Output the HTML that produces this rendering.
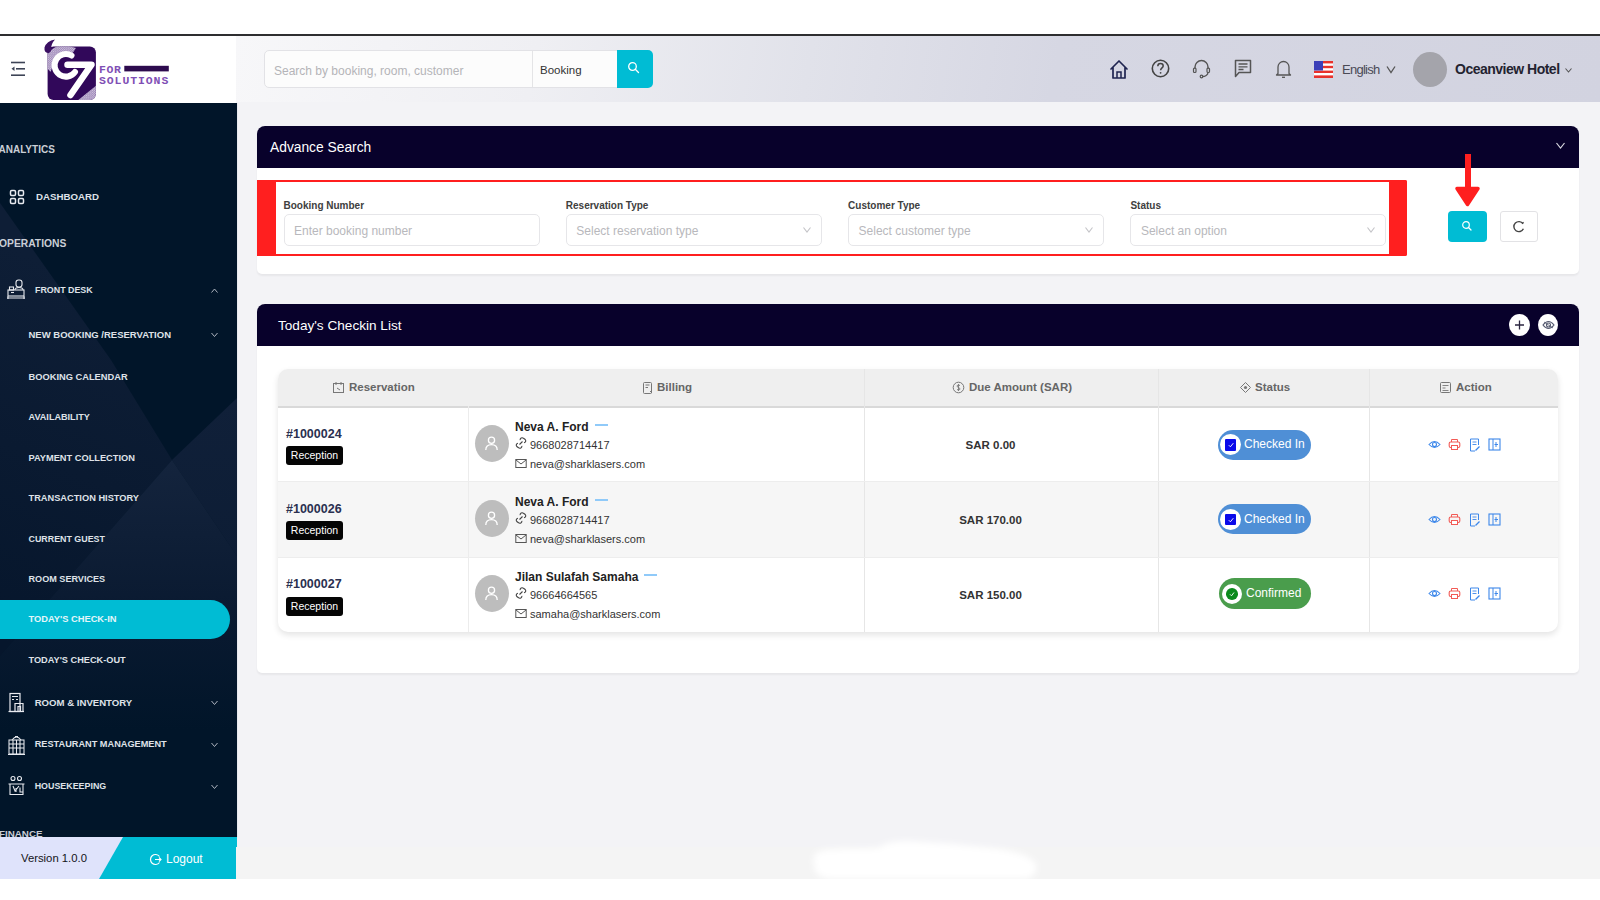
<!DOCTYPE html>
<html><head><meta charset="utf-8">
<style>
*{margin:0;padding:0;box-sizing:border-box}
html,body{width:1600px;height:900px;overflow:hidden;background:#fff;font-family:"Liberation Sans",sans-serif}
.abs{position:absolute}
#topline{left:0;top:34px;width:1600px;height:2px;background:#2e2e30}
#logozone{left:0;top:36px;width:236px;height:67px;background:#fff}
#hdr{left:236px;top:36px;width:1364px;height:66px;background:linear-gradient(100deg,#f7f7f9 0%,#efeff3 22%,#e1e2ea 42%,#d6d7e3 60%,#d2d3e0 100%)}
#main{left:236px;top:102px;width:1364px;height:777px;background:#f3f3f6}
#side{left:0;top:103px;width:236.7px;height:734px;background:#011529;overflow:hidden}
#sideborder{left:236.7px;top:103px;width:1px;height:734px;background:#e8e9ee}
#botbar{left:0;top:837px;width:236px;height:42px;background:#00bcd4;overflow:hidden}
#bottom{left:0;top:879px;width:1600px;height:21px;background:#fff}
.card{background:#fff;border-radius:8px 8px 5px 5px;box-shadow:0 1.5px 2px rgba(0,0,0,0.05)}
.chd{background:#08012b;border-radius:8px 8px 0 0;color:#fff}
</style></head>
<body>
<div class="abs" id="topline"></div>
<div class="abs" id="logozone"></div>
<div class="abs" id="hdr"></div>
<div class="abs" id="main"></div>
<div class="abs" id="side"></div>
<div class="abs" id="sideborder"></div>

<!-- sidebar -->
<svg class="abs" style="left:0;top:103px" width="236.7" height="734" viewBox="0 103 236.7 734">
  <defs>
    <linearGradient id="g1" x1="140" y1="300" x2="0" y2="640" gradientUnits="userSpaceOnUse">
      <stop offset="0" stop-color="#0e1e36"/>
      <stop offset="1" stop-color="#06162c"/>
    </linearGradient>
    <linearGradient id="g2" x1="0" y1="400" x2="0" y2="560" gradientUnits="userSpaceOnUse">
      <stop offset="0" stop-color="#102039"/>
      <stop offset="1" stop-color="#0d1d35"/>
    </linearGradient>
    <linearGradient id="g3" x1="0" y1="460" x2="0" y2="730" gradientUnits="userSpaceOnUse">
      <stop offset="0" stop-color="#14243d"/>
      <stop offset="0.55" stop-color="#0a1a31"/>
      <stop offset="1" stop-color="#011529"/>
    </linearGradient>
  </defs>
  <polygon points="0,203 111,360 172,460 0,656" fill="url(#g1)"/>
  <polygon points="237,398 172,460 237,556" fill="url(#g2)"/>
  <polygon points="172,460 0,656 0,837 237,837 237,556" fill="url(#g3)"/>
</svg>
<div class="abs" style="left:0;top:600px;width:230px;height:39px;background:#00bcd4;border-radius:0 20px 20px 0"></div>
<div class="abs" style="left:-1.5px;top:144.2px;font-size:10px;line-height:11.5px;font-weight:700;color:#c9ced6;white-space:nowrap">ANALYTICS</div>
<div class="abs" style="left:36px;top:191.4px;font-size:9.7px;line-height:11.2px;font-weight:700;color:#dfe2e8;white-space:nowrap">DASHBOARD</div>
<div class="abs" style="left:-1px;top:238.0px;font-size:10.3px;line-height:11.8px;font-weight:700;color:#c9ced6;white-space:nowrap">OPERATIONS</div>
<div class="abs" style="left:35px;top:284.8px;font-size:8.9px;line-height:10.2px;font-weight:700;color:#dfe2e8;white-space:nowrap">FRONT DESK</div>
<div class="abs" style="left:28.5px;top:329.5px;font-size:9.5px;line-height:10.9px;font-weight:700;color:#dfe2e8;white-space:nowrap">NEW BOOKING /RESERVATION</div>
<div class="abs" style="left:28.5px;top:371.6px;font-size:9.3px;line-height:10.7px;font-weight:700;color:#dfe2e8;white-space:nowrap">BOOKING CALENDAR</div>
<div class="abs" style="left:28.5px;top:412.4px;font-size:9.1px;line-height:10.5px;font-weight:700;color:#dfe2e8;white-space:nowrap">AVAILABILITY</div>
<div class="abs" style="left:28.5px;top:452.6px;font-size:9.25px;line-height:10.6px;font-weight:700;color:#dfe2e8;white-space:nowrap">PAYMENT COLLECTION</div>
<div class="abs" style="left:28.5px;top:492.6px;font-size:9.25px;line-height:10.6px;font-weight:700;color:#dfe2e8;white-space:nowrap">TRANSACTION HISTORY</div>
<div class="abs" style="left:28.5px;top:533.5px;font-size:8.9px;line-height:10.2px;font-weight:700;color:#dfe2e8;white-space:nowrap">CURRENT GUEST</div>
<div class="abs" style="left:28.5px;top:573.7px;font-size:9.1px;line-height:10.5px;font-weight:700;color:#dfe2e8;white-space:nowrap">ROOM SERVICES</div>
<div class="abs" style="left:28.5px;top:613.6px;font-size:9.3px;line-height:10.7px;font-weight:700;color:#e3f6f9;white-space:nowrap">TODAY'S CHECK-IN</div>
<div class="abs" style="left:28.5px;top:654.7px;font-size:9.2px;line-height:10.6px;font-weight:700;color:#dfe2e8;white-space:nowrap">TODAY'S CHECK-OUT</div>
<div class="abs" style="left:34.7px;top:697.4px;font-size:9.6px;line-height:11.0px;font-weight:700;color:#dfe2e8;white-space:nowrap">ROOM &amp; INVENTORY</div>
<div class="abs" style="left:34.7px;top:739.0px;font-size:9.2px;line-height:10.6px;font-weight:700;color:#dfe2e8;white-space:nowrap">RESTAURANT MANAGEMENT</div>
<div class="abs" style="left:34.7px;top:780.5px;font-size:8.9px;line-height:10.2px;font-weight:700;color:#dfe2e8;white-space:nowrap">HOUSEKEEPING</div>
<div class="abs" style="left:-1px;top:828.3px;font-size:9.8px;line-height:11.3px;font-weight:700;color:#c9ced6;white-space:nowrap">FINANCE</div>
<svg class="abs" style="left:209.5px;top:286.5px" width="9" height="7" viewBox="0 0 9 7"><path d="M1.5 5.5L4.5 2L7.5 5.5" fill="none" stroke="#aeb4bf" stroke-width="1"/></svg>
<svg class="abs" style="left:209.5px;top:331.0px" width="9" height="7" viewBox="0 0 9 7"><path d="M1.5 2L4.5 5.5L7.5 2" fill="none" stroke="#aeb4bf" stroke-width="1"/></svg>
<svg class="abs" style="left:209.5px;top:698.5px" width="9" height="7" viewBox="0 0 9 7"><path d="M1.5 2L4.5 5.5L7.5 2" fill="none" stroke="#aeb4bf" stroke-width="1"/></svg>
<svg class="abs" style="left:209.5px;top:740.5px" width="9" height="7" viewBox="0 0 9 7"><path d="M1.5 2L4.5 5.5L7.5 2" fill="none" stroke="#aeb4bf" stroke-width="1"/></svg>
<svg class="abs" style="left:209.5px;top:782.5px" width="9" height="7" viewBox="0 0 9 7"><path d="M1.5 2L4.5 5.5L7.5 2" fill="none" stroke="#aeb4bf" stroke-width="1"/></svg>
<svg class="abs" style="left:9px;top:189px" width="16" height="16" viewBox="0 0 16 16" fill="none" stroke="#e8eaef" stroke-width="1.5"><rect x="1.5" y="1.5" width="5" height="5" rx="1.2"/><rect x="9.5" y="1.5" width="5" height="5" rx="1.2"/><rect x="1.5" y="9.5" width="5" height="5" rx="1.2"/><rect x="9.5" y="9.5" width="5" height="5" rx="1.2"/></svg>
<svg class="abs" style="left:6px;top:278px" width="20" height="22" viewBox="0 0 20 22" fill="none" stroke="#e8eaef" stroke-width="1.1"><rect x="10" y="2" width="6" height="7" rx="2.5"/><path d="M9 12Q9 9.5 13 9.5Q17 9.5 17 12"/><rect x="2" y="12" width="16" height="6"/><path d="M1 20H19M2 18V21M18 18V21"/><rect x="3.5" y="9" width="4" height="3"/><path d="M5 14.5H8"/></svg>
<svg class="abs" style="left:8px;top:692px" width="17" height="21" viewBox="0 0 17 21" fill="none" stroke="#e8eaef" stroke-width="1.2"><rect x="2" y="1.5" width="10" height="18"/><path d="M0.5 19.5H16"/><path d="M4 4.5H10M4 7.5H6M8 7.5H10"/><path d="M7 19.5V11.5H15V19.5"/><path d="M10 19.5V14.5H12.5V19.5"/></svg>
<svg class="abs" style="left:7px;top:734px" width="19" height="22" viewBox="0 0 19 22" fill="none" stroke="#e8eaef" stroke-width="1.05"><path d="M5 6Q9.5 0 14 6"/><path d="M8 2.5H11"/><rect x="2" y="6" width="15" height="14"/><path d="M2 10H17M2 14H17M6 6V20M9.5 6V20M13 6V20M1 20.5H18"/></svg>
<svg class="abs" style="left:7px;top:775px" width="19" height="21" viewBox="0 0 19 21" fill="none" stroke="#e8eaef" stroke-width="1.1"><circle cx="6" cy="3.5" r="2"/><circle cx="12.5" cy="3.5" r="2"/><path d="M1.5 9H17.5M3 9V19.5H16V9"/><path d="M6 11L8 16L12 11M9 13V17"/><path d="M13 12.5V17H16"/></svg>
<svg class="abs" style="left:0;top:837px" width="237" height="42" viewBox="0 0 237 42"><rect width="237" height="42" fill="#00bcd4"/><polygon points="0,0 123,0 99,42 0,42" fill="#dfe3fb"/></svg>
<div class="abs" style="left:21px;top:852px;font-size:11.3px;color:#141418;white-space:nowrap">Version 1.0.0</div>
<svg class="abs" style="left:149px;top:853px" width="13" height="13" viewBox="0 0 13 13"><path d="M10.5 3.5A5 5 0 1 0 10.5 9.5" fill="none" stroke="#fff" stroke-width="1.2"/><path d="M6 6.5H12M10 4.5L12 6.5L10 8.5" fill="none" stroke="#fff" stroke-width="1.1"/></svg>
<div class="abs" style="left:166px;top:852px;font-size:12px;color:#fff;white-space:nowrap">Logout</div>


<div class="abs" style="left:236px;top:847px;width:1364px;height:32px;background:#f4f4f4"></div>
<svg class="abs" style="left:800px;top:835px" width="250" height="50" viewBox="0 0 250 50"><defs><filter id="bl" x="-20%" y="-50%" width="140%" height="200%"><feGaussianBlur stdDeviation="3"/></filter></defs>
<path d="M14 26 Q10 14 40 14 L78 13 Q88 5 110 6 Q145 8 180 12 Q230 16 236 30 Q238 44 220 44 L30 44 Q12 42 14 26Z" fill="#fff" filter="url(#bl)"/></svg>
<div class="abs" id="bottom"></div>


<!-- header content -->
<svg class="abs" style="left:9px;top:59px" width="18" height="20" viewBox="0 0 18 20">
  <path d="M2 3.5H16" stroke="#3d4456" stroke-width="1.6"/>
  <path d="M7 9.8H16" stroke="#3d4456" stroke-width="1.6"/>
  <path d="M2 16.2H16" stroke="#3d4456" stroke-width="1.6"/>
  <path d="M5.5 7.5L2.5 9.8L5.5 12.1Z" fill="#3d4456"/>
</svg>
<svg class="abs" style="left:40px;top:38px" width="136" height="66" viewBox="0 0 136 66">
  <defs>
    <pattern id="dots" width="2.2" height="2.2" patternUnits="userSpaceOnUse"><rect width="2.2" height="2.2" fill="#9c86b6"/><circle cx="0.55" cy="0.55" r="0.5" fill="#e6def0"/><circle cx="1.65" cy="1.65" r="0.5" fill="#e6def0"/></pattern>
    <clipPath id="sq"><rect x="7.6" y="8.6" width="48.3" height="53.3" rx="6"/></clipPath>
  </defs>
  <rect x="7.6" y="8.6" width="48.3" height="53.3" rx="6" fill="#31085a"/>
  <g clip-path="url(#sq)">
    <path d="M24.5 7 A20 20 0 0 0 4.5 27 L10.5 34 L13.2 27 A11.3 11.3 0 0 1 31 17.5 L36 10 Z" fill="url(#dots)"/>
    <path d="M37 63 L57 47 L58 64 Z" fill="url(#dots)"/>
  </g>
  <path d="M15 1.5 Q6.5 3 4.5 9.5 Q4 14.5 8 15 Q11.5 14.5 11.2 10.5 Q11 6 15 1.5Z" fill="#3a0f62"/>
  <path d="M31.5 17.5 A11.3 11.3 0 1 0 35 34" fill="none" stroke="#fff" stroke-width="6" stroke-linecap="round"/>
  <path d="M27.5 26.7 H51.5 L30.5 57" fill="none" stroke="#fff" stroke-width="6.5" stroke-linecap="round" stroke-linejoin="round"/>
  <text x="59" y="34.6" font-family="Liberation Mono" font-weight="700" font-size="11.5" fill="#7f4fb5" letter-spacing="0.6">FOR</text>
  <rect x="84.3" y="27.8" width="44.5" height="5.6" fill="#2d0b4e"/>
  <text x="59" y="45.8" font-family="Liberation Mono" font-weight="700" font-size="11.5" fill="#7f4fb5" letter-spacing="0.9">SOLUTIONS</text>
</svg>

<div class="abs" style="left:264px;top:50px;width:354px;height:38px;background:#fcfcfc;border:1px solid #e2e2e6;border-radius:5px 0 0 5px"></div>
<div class="abs" style="left:532px;top:51px;width:1px;height:36px;background:#e4e4e6"></div>
<div class="abs" style="left:274px;top:63.5px;font-size:12px;color:#b4b4b8;white-space:nowrap">Search by booking, room, customer</div>
<div class="abs" style="left:540px;top:63.5px;font-size:11.5px;color:#333;white-space:nowrap">Booking</div>
<div class="abs" style="left:617px;top:50px;width:36px;height:38px;background:#00bcd4;border-radius:0 5px 5px 0"></div>
<svg class="abs" style="left:627px;top:61px" width="14" height="14" viewBox="0 0 14 14"><circle cx="5.5" cy="5.5" r="3.8" fill="none" stroke="#fff" stroke-width="1.3"/><path d="M8.3 8.3L11.5 11.5" stroke="#fff" stroke-width="1.3" stroke-linecap="round"/></svg>

<!-- right icons -->
<svg class="abs" style="left:1109px;top:59px" width="20" height="21" viewBox="0 0 20 21"><path d="M2 10L10 2L18 10M4 8.5V19H16V8.5" fill="none" stroke="#1f2450" stroke-width="1.7" stroke-linejoin="round" stroke-linecap="round"/><path d="M8 19V13H12V19" fill="none" stroke="#1f2450" stroke-width="1.5"/></svg>
<svg class="abs" style="left:1151px;top:59px" width="19" height="19" viewBox="0 0 19 19"><circle cx="9.5" cy="9.5" r="8.2" fill="none" stroke="#444" stroke-width="1.6"/><path d="M6.8 7.3C6.8 5.6 8 4.6 9.5 4.6C11.1 4.6 12.2 5.6 12.2 7C12.2 8.8 9.6 9 9.6 11.2" fill="none" stroke="#444" stroke-width="1.5"/><circle cx="9.6" cy="13.8" r="0.9" fill="#444"/></svg>
<svg class="abs" style="left:1192px;top:59px" width="19" height="20" viewBox="0 0 19 20"><path d="M3 10V8A6.5 6.5 0 0 1 16 8V10" fill="none" stroke="#555" stroke-width="1.4"/><rect x="1.5" y="9" width="2.5" height="4.5" rx="1" fill="none" stroke="#555" stroke-width="1.2"/><rect x="15" y="9" width="2.5" height="4.5" rx="1" fill="none" stroke="#555" stroke-width="1.2"/><path d="M16 13.5C16 16 13 17.5 10.5 17.5" fill="none" stroke="#555" stroke-width="1.3"/><circle cx="9.5" cy="17.5" r="1.3" fill="none" stroke="#555" stroke-width="1.2"/></svg>
<svg class="abs" style="left:1234px;top:59px" width="18" height="19" viewBox="0 0 18 19"><path d="M1.5 1.5H16.5V13.5H5L1.5 17.5Z" fill="none" stroke="#555" stroke-width="1.5" stroke-linejoin="round"/><path d="M4.5 5H13.5M4.5 7.8H13.5M4.5 10.5H9.5" stroke="#555" stroke-width="1.3"/></svg>
<svg class="abs" style="left:1275px;top:59px" width="17" height="20" viewBox="0 0 17 20"><path d="M3 14.5V8A5.5 5.5 0 0 1 14 8V14.5L15.5 16H1.5Z" fill="none" stroke="#555" stroke-width="1.3" stroke-linejoin="round"/><path d="M7 18.3H10" stroke="#555" stroke-width="1.3"/></svg>
<svg class="abs" style="left:1314px;top:61px" width="19" height="17" viewBox="0 0 19 17"><rect width="19" height="17" fill="#fff"/><rect y="0" width="19" height="2.4" fill="#e8322b"/><rect y="4.8" width="19" height="2.4" fill="#e8322b"/><rect y="9.6" width="19" height="2.4" fill="#e8322b"/><rect y="14.4" width="19" height="2.6" fill="#e8322b"/><rect width="9" height="9.5" fill="#3b3fb8"/></svg>
<div class="abs" style="left:1342px;top:61.5px;font-size:13px;letter-spacing:-0.75px;color:#4a4a55;white-space:nowrap">English</div>
<svg class="abs" style="left:1386px;top:65px" width="10" height="9" viewBox="0 0 10 9"><path d="M1 1.5L5 7.5L9 1.5" fill="none" stroke="#555" stroke-width="1.3"/></svg>
<div class="abs" style="left:1413px;top:52px;width:34px;height:35px;border-radius:50%;background:#a4a4ab"></div>
<div class="abs" style="left:1455px;top:61px;font-size:14px;letter-spacing:-0.5px;font-weight:700;color:#232330;white-space:nowrap">Oceanview Hotel</div>
<svg class="abs" style="left:1564px;top:67px" width="9" height="7" viewBox="0 0 9 7"><path d="M1.5 1.5L4.5 5L7.5 1.5" fill="none" stroke="#555" stroke-width="1.1"/></svg>

<!-- card 1 -->
<div class="abs card" style="left:257px;top:126px;width:1322px;height:148px"></div>
<div class="abs chd" style="left:257px;top:126px;width:1322px;height:42px"></div>


<div class="abs" style="left:270px;top:139.5px;font-size:13.8px;color:#fff;white-space:nowrap">Advance Search</div>
<svg class="abs" style="left:1555px;top:141px" width="11" height="9" viewBox="0 0 11 9"><path d="M1.5 2L5.5 7L9.5 2" fill="none" stroke="#d8d8e0" stroke-width="1.2"/></svg>
<!-- red highlight -->
<div class="abs" style="left:257px;top:180px;width:1150px;height:76px;border:2px solid #ff1f1f;border-radius:2px"></div>
<div class="abs" style="left:257px;top:180px;width:19px;height:76px;background:#ff1f1f"></div>
<div class="abs" style="left:1389px;top:180px;width:18px;height:76px;background:#ff1f1f;border-radius:0 2px 2px 0"></div>
<div class="abs" style="left:283.5px;top:200px;font-size:10px;font-weight:700;color:#404040;white-space:nowrap">Booking Number</div>
<div class="abs" style="left:283.5px;top:214px;width:256px;height:32px;border:1px solid #e6e6e9;border-radius:5px;background:#fff"></div>
<div class="abs" style="left:294.0px;top:223.5px;font-size:12px;color:#b8b8bc;white-space:nowrap">Enter booking number</div>
<div class="abs" style="left:565.8px;top:200px;font-size:10px;font-weight:700;color:#404040;white-space:nowrap">Reservation Type</div>
<div class="abs" style="left:565.8px;top:214px;width:256px;height:32px;border:1px solid #e6e6e9;border-radius:5px;background:#fff"></div>
<div class="abs" style="left:576.3px;top:223.5px;font-size:12px;color:#b8b8bc;white-space:nowrap">Select reservation type</div>
<svg class="abs" style="left:801.8px;top:226px" width="10" height="8" viewBox="0 0 10 8"><path d="M1.5 1.5L5 6L8.5 1.5" fill="none" stroke="#c4c4c8" stroke-width="1.1"/></svg>
<div class="abs" style="left:848.1px;top:200px;font-size:10px;font-weight:700;color:#404040;white-space:nowrap">Customer Type</div>
<div class="abs" style="left:848.1px;top:214px;width:256px;height:32px;border:1px solid #e6e6e9;border-radius:5px;background:#fff"></div>
<div class="abs" style="left:858.6px;top:223.5px;font-size:12px;color:#b8b8bc;white-space:nowrap">Select customer type</div>
<svg class="abs" style="left:1084.1px;top:226px" width="10" height="8" viewBox="0 0 10 8"><path d="M1.5 1.5L5 6L8.5 1.5" fill="none" stroke="#c4c4c8" stroke-width="1.1"/></svg>
<div class="abs" style="left:1130.4px;top:200px;font-size:10px;font-weight:700;color:#404040;white-space:nowrap">Status</div>
<div class="abs" style="left:1130.4px;top:214px;width:256px;height:32px;border:1px solid #e6e6e9;border-radius:5px;background:#fff"></div>
<div class="abs" style="left:1140.9px;top:223.5px;font-size:12px;color:#b8b8bc;white-space:nowrap">Select an option</div>
<svg class="abs" style="left:1366.4px;top:226px" width="10" height="8" viewBox="0 0 10 8"><path d="M1.5 1.5L5 6L8.5 1.5" fill="none" stroke="#c4c4c8" stroke-width="1.1"/></svg>

<div class="abs" style="left:1448px;top:211px;width:39px;height:31px;background:#00bcd4;border-radius:4px"></div>
<svg class="abs" style="left:1461px;top:220px" width="13" height="13" viewBox="0 0 13 13"><circle cx="5" cy="5" r="3.3" fill="none" stroke="#fff" stroke-width="1.2"/><path d="M7.5 7.5L10 10" stroke="#fff" stroke-width="1.2" stroke-linecap="round"/></svg>
<div class="abs" style="left:1500px;top:211px;width:38px;height:31px;background:#fff;border:1px solid #e2e2e5;border-radius:3px"></div>
<svg class="abs" style="left:1511px;top:219px" width="15" height="15" viewBox="0 0 15 15"><path d="M12 4.8A5 5 0 1 0 12.4 9.8" fill="none" stroke="#444" stroke-width="1.4"/><path d="M11.3 4.2L12.6 3.2" stroke="#444" stroke-width="1.3"/></svg>
<!-- red arrow -->
<div class="abs" style="left:1464.5px;top:154px;width:6px;height:36px;background:#ff1f1f"></div>
<svg class="abs" style="left:1453px;top:184px" width="29" height="24" viewBox="0 0 29 24"><path d="M4 4.5L25 4.5L14.5 20.5Z" fill="#ff1f1f" stroke="#ff1f1f" stroke-width="3.5" stroke-linejoin="round"/></svg>

<!-- card 2 -->
<div class="abs card" style="left:257px;top:304px;width:1322px;height:369px"></div>
<div class="abs chd" style="left:257px;top:304px;width:1322px;height:42px"></div>


<div class="abs" style="left:278px;top:317.5px;font-size:13.6px;color:#fff;white-space:nowrap">Today's Checkin List</div>
<div class="abs" style="left:1509px;top:314px;width:21px;height:22px;border-radius:50%;background:#fff"></div>
<svg class="abs" style="left:1513px;top:319px" width="13" height="12" viewBox="0 0 13 12"><path d="M6.5 1.5V10.5M2 6H11" stroke="#2a2540" stroke-width="1.3"/></svg>
<div class="abs" style="left:1538px;top:314px;width:20px;height:22px;border-radius:50%;background:#fff"></div>
<svg class="abs" style="left:1542px;top:319px" width="13" height="12" viewBox="0 0 13 12"><path d="M1 6Q6.5 -1 12 6Q6.5 13 1 6Z" fill="none" stroke="#555a70" stroke-width="1.2"/><circle cx="6.5" cy="6" r="2" fill="none" stroke="#555a70" stroke-width="1.1"/><path d="M2 3L11 9" stroke="#555a70" stroke-width="0.8"/></svg>

<!-- table -->
<div class="abs" style="left:278px;top:369px;width:1280px;height:263px;background:#fff;border-radius:10px;box-shadow:0 3px 6px rgba(0,0,0,0.11);overflow:hidden">
  <div style="position:absolute;left:0;top:0;width:1280px;height:38.5px;background:#efefef;border-bottom:2px solid #d9d9d9"></div>
  <div style="position:absolute;left:0;top:112px;width:1280px;height:76px;background:#f6f6f6"></div>
  <div style="position:absolute;left:190px;top:37px;width:1px;height:226px;background:#ececec"></div>
  <div style="position:absolute;left:586px;top:0;width:1px;height:263px;background:#e6e6e6"></div>
  <div style="position:absolute;left:880px;top:0;width:1px;height:263px;background:#e6e6e6"></div>
  <div style="position:absolute;left:1091px;top:0;width:1px;height:263px;background:#e6e6e6"></div>
  <div style="position:absolute;left:0;top:112px;width:1280px;height:1px;background:#ededed"></div>
  <div style="position:absolute;left:0;top:188px;width:1280px;height:1px;background:#ededed"></div>
</div>
<div class="abs" style="left:349px;top:381px;font-size:11.5px;font-weight:700;color:#666;white-space:nowrap">Reservation</div>
<svg class="abs" style="left:332px;top:381px" width="13" height="13" viewBox="0 0 13 13"><rect x="1.5" y="2.5" width="10" height="9" fill="none" stroke="#777" stroke-width="1"/><path d="M4 1V4M9 1V4M5 7L8 9" stroke="#777" stroke-width="1"/></svg>
<div class="abs" style="left:657px;top:381px;font-size:11.5px;font-weight:700;color:#666;white-space:nowrap">Billing</div>
<svg class="abs" style="left:641px;top:381px" width="13" height="13" viewBox="0 0 13 13"><rect x="2.5" y="1.5" width="8" height="11" rx="1" fill="none" stroke="#777" stroke-width="1"/><path d="M4.5 4H8.5M4.5 6.5H7" stroke="#777" stroke-width="1"/><path d="M9 10L11 12" stroke="#777" stroke-width="1"/></svg>
<div class="abs" style="left:969px;top:381px;font-size:11.5px;font-weight:700;color:#666;white-space:nowrap">Due Amount (SAR)</div>
<svg class="abs" style="left:952px;top:381px" width="13" height="13" viewBox="0 0 13 13"><circle cx="6.5" cy="6.5" r="5.3" fill="none" stroke="#777" stroke-width="1"/><path d="M8 4.5Q6.5 3.5 5.2 4.5Q4.5 5.8 6.5 6.5Q8.5 7.2 7.8 8.5Q6.5 9.5 5 8.5M6.5 3V10" fill="none" stroke="#777" stroke-width="0.9"/></svg>
<div class="abs" style="left:1255px;top:381px;font-size:11.5px;font-weight:700;color:#666;white-space:nowrap">Status</div>
<svg class="abs" style="left:1239px;top:381px" width="13" height="13" viewBox="0 0 13 13"><path d="M6.5 1.5L11.5 6.5L6.5 11.5L1.5 6.5Z" fill="none" stroke="#777" stroke-width="1"/><circle cx="6.5" cy="6.5" r="1.6" fill="#777"/></svg>
<div class="abs" style="left:1456px;top:381px;font-size:11.5px;font-weight:700;color:#666;white-space:nowrap">Action</div>
<svg class="abs" style="left:1439px;top:381px" width="13" height="13" viewBox="0 0 13 13"><rect x="1.5" y="1.5" width="10" height="10" rx="1" fill="none" stroke="#777" stroke-width="1"/><path d="M3.5 4.5H9.5M3.5 7H6.5M3.5 9.5H9.5" stroke="#777" stroke-width="0.9"/></svg>
<div class="abs" style="left:286px;top:427.3px;font-size:12.5px;font-weight:700;color:#2a3050;white-space:nowrap">#1000024</div>
<div class="abs" style="left:286px;top:446.0px;width:57px;height:19px;background:#050505;border-radius:3px;color:#fff;font-size:10.5px;line-height:19px;text-align:center">Reception</div>
<div class="abs" style="left:474.5px;top:425.3px;width:34px;height:37px;border-radius:50%;background:#bdbdbd"></div>
<svg class="abs" style="left:482px;top:433.8px" width="19" height="19" viewBox="0 0 19 19"><circle cx="9.5" cy="6.3" r="3.1" fill="none" stroke="#fff" stroke-width="1.3"/><path d="M3.8 16Q3.8 10.7 9.5 10.7Q15.2 10.7 15.2 16" fill="none" stroke="#fff" stroke-width="1.3"/></svg>
<div class="abs" style="left:515px;top:420.3px;font-size:12px;font-weight:700;color:#222;white-space:nowrap"><span>Neva A. Ford</span><span style="display:inline-block;width:13px;height:2px;background:#90caf9;margin-left:6px;vertical-align:middle;position:relative;top:-3px"></span></div>
<svg class="abs" style="left:515px;top:437.3px" width="12" height="12" viewBox="0 0 12 12"><path d="M5.2 3.2A2 2 0 0 1 8.5 1.3L10.2 2.5A2 2 0 0 1 9 5.8" fill="none" stroke="#444" stroke-width="1.1"/><path d="M6.8 8.8A2 2 0 0 1 3.5 10.7L1.8 9.5A2 2 0 0 1 3 6.2" fill="none" stroke="#444" stroke-width="1.1"/><path d="M4.5 7.5L7.5 4.5" stroke="#444" stroke-width="1.1"/></svg>
<div class="abs" style="left:530px;top:439.3px;font-size:11px;color:#333;white-space:nowrap">9668028714417</div>
<svg class="abs" style="left:515px;top:458.3px" width="12" height="11" viewBox="0 0 12 11"><rect x="0.8" y="1.5" width="10.4" height="8" fill="none" stroke="#555" stroke-width="1"/><path d="M1 2L6 6L11 2" fill="none" stroke="#555" stroke-width="1"/></svg>
<div class="abs" style="left:530px;top:458.3px;font-size:11px;color:#333;white-space:nowrap">neva@sharklasers.com</div>
<div class="abs" style="left:864px;width:253px;top:438.8px;font-size:11.5px;font-weight:700;color:#333;text-align:center;white-space:nowrap">SAR 0.00</div>
<div class="abs" style="left:1217.5px;top:429.8px;width:93px;height:30px;border-radius:15px;background:#4f8fd6"></div>
<div class="abs" style="left:1219.5px;top:434.3px;width:21px;height:21px;border-radius:50%;background:#fff"></div>
<div class="abs" style="left:1224.5px;top:439.3px;width:11.5px;height:11.5px;background:#0a0aea;border-radius:1px"></div>
<svg class="abs" style="left:1224.5px;top:439.3px" width="12" height="12" viewBox="0 0 12 12"><path d="M3.8 6.2L5.4 7.8L8.3 4.2" fill="none" stroke="#fff" stroke-width="0.9"/></svg>
<div class="abs" style="left:1244px;top:437.3px;font-size:12px;color:#fff;white-space:nowrap">Checked In</div>
<svg class="abs" style="left:1427.5px;top:439.3px" width="13" height="11" viewBox="0 0 13 11"><path d="M1 5.5Q6.5 -0.5 12 5.5Q6.5 11.5 1 5.5Z" fill="none" stroke="#3c87ea" stroke-width="1.1"/><circle cx="6.5" cy="5.5" r="2" fill="none" stroke="#3c87ea" stroke-width="1.1"/></svg>
<svg class="abs" style="left:1447.5px;top:438.3px" width="13" height="13" viewBox="0 0 13 13"><path d="M3.5 4V1.5H9.5V4" fill="none" stroke="#f25a55" stroke-width="1"/><rect x="1.2" y="4" width="10.6" height="5.5" rx="1.5" fill="none" stroke="#f25a55" stroke-width="1.1"/><rect x="3.5" y="7.5" width="6" height="4" fill="#fff" stroke="#f25a55" stroke-width="1"/></svg>
<svg class="abs" style="left:1468.5px;top:438.3px" width="12" height="14" viewBox="0 0 12 14"><path d="M1.5 1H9.5V7M1.5 1V13H6" fill="none" stroke="#3c87ea" stroke-width="1"/><path d="M3.5 4H7.5M3.5 6.5H7.5" stroke="#3c87ea" stroke-width="0.9"/><path d="M6.5 12.5L10.5 8.5" stroke="#3c87ea" stroke-width="1.3"/></svg>
<svg class="abs" style="left:1488px;top:438.3px" width="13" height="13" viewBox="0 0 13 13"><rect x="1" y="1" width="11" height="11" fill="none" stroke="#3c87ea" stroke-width="1.1"/><path d="M5 1V12M8 4V9M10 6.5H6.5" stroke="#3c87ea" stroke-width="1"/></svg>
<div class="abs" style="left:286px;top:502.3px;font-size:12.5px;font-weight:700;color:#2a3050;white-space:nowrap">#1000026</div>
<div class="abs" style="left:286px;top:521.0px;width:57px;height:19px;background:#050505;border-radius:3px;color:#fff;font-size:10.5px;line-height:19px;text-align:center">Reception</div>
<div class="abs" style="left:474.5px;top:500.3px;width:34px;height:37px;border-radius:50%;background:#bdbdbd"></div>
<svg class="abs" style="left:482px;top:508.8px" width="19" height="19" viewBox="0 0 19 19"><circle cx="9.5" cy="6.3" r="3.1" fill="none" stroke="#fff" stroke-width="1.3"/><path d="M3.8 16Q3.8 10.7 9.5 10.7Q15.2 10.7 15.2 16" fill="none" stroke="#fff" stroke-width="1.3"/></svg>
<div class="abs" style="left:515px;top:495.3px;font-size:12px;font-weight:700;color:#222;white-space:nowrap"><span>Neva A. Ford</span><span style="display:inline-block;width:13px;height:2px;background:#90caf9;margin-left:6px;vertical-align:middle;position:relative;top:-3px"></span></div>
<svg class="abs" style="left:515px;top:512.3px" width="12" height="12" viewBox="0 0 12 12"><path d="M5.2 3.2A2 2 0 0 1 8.5 1.3L10.2 2.5A2 2 0 0 1 9 5.8" fill="none" stroke="#444" stroke-width="1.1"/><path d="M6.8 8.8A2 2 0 0 1 3.5 10.7L1.8 9.5A2 2 0 0 1 3 6.2" fill="none" stroke="#444" stroke-width="1.1"/><path d="M4.5 7.5L7.5 4.5" stroke="#444" stroke-width="1.1"/></svg>
<div class="abs" style="left:530px;top:514.3px;font-size:11px;color:#333;white-space:nowrap">9668028714417</div>
<svg class="abs" style="left:515px;top:533.3px" width="12" height="11" viewBox="0 0 12 11"><rect x="0.8" y="1.5" width="10.4" height="8" fill="none" stroke="#555" stroke-width="1"/><path d="M1 2L6 6L11 2" fill="none" stroke="#555" stroke-width="1"/></svg>
<div class="abs" style="left:530px;top:533.3px;font-size:11px;color:#333;white-space:nowrap">neva@sharklasers.com</div>
<div class="abs" style="left:864px;width:253px;top:513.8px;font-size:11.5px;font-weight:700;color:#333;text-align:center;white-space:nowrap">SAR 170.00</div>
<div class="abs" style="left:1217.5px;top:504.3px;width:93px;height:30px;border-radius:15px;background:#4f8fd6"></div>
<div class="abs" style="left:1219.5px;top:508.8px;width:21px;height:21px;border-radius:50%;background:#fff"></div>
<div class="abs" style="left:1224.5px;top:513.8px;width:11.5px;height:11.5px;background:#0a0aea;border-radius:1px"></div>
<svg class="abs" style="left:1224.5px;top:513.8px" width="12" height="12" viewBox="0 0 12 12"><path d="M3.8 6.2L5.4 7.8L8.3 4.2" fill="none" stroke="#fff" stroke-width="0.9"/></svg>
<div class="abs" style="left:1244px;top:511.8px;font-size:12px;color:#fff;white-space:nowrap">Checked In</div>
<svg class="abs" style="left:1427.5px;top:513.8px" width="13" height="11" viewBox="0 0 13 11"><path d="M1 5.5Q6.5 -0.5 12 5.5Q6.5 11.5 1 5.5Z" fill="none" stroke="#3c87ea" stroke-width="1.1"/><circle cx="6.5" cy="5.5" r="2" fill="none" stroke="#3c87ea" stroke-width="1.1"/></svg>
<svg class="abs" style="left:1447.5px;top:512.8px" width="13" height="13" viewBox="0 0 13 13"><path d="M3.5 4V1.5H9.5V4" fill="none" stroke="#f25a55" stroke-width="1"/><rect x="1.2" y="4" width="10.6" height="5.5" rx="1.5" fill="none" stroke="#f25a55" stroke-width="1.1"/><rect x="3.5" y="7.5" width="6" height="4" fill="#fff" stroke="#f25a55" stroke-width="1"/></svg>
<svg class="abs" style="left:1468.5px;top:512.8px" width="12" height="14" viewBox="0 0 12 14"><path d="M1.5 1H9.5V7M1.5 1V13H6" fill="none" stroke="#3c87ea" stroke-width="1"/><path d="M3.5 4H7.5M3.5 6.5H7.5" stroke="#3c87ea" stroke-width="0.9"/><path d="M6.5 12.5L10.5 8.5" stroke="#3c87ea" stroke-width="1.3"/></svg>
<svg class="abs" style="left:1488px;top:512.8px" width="13" height="13" viewBox="0 0 13 13"><rect x="1" y="1" width="11" height="11" fill="none" stroke="#3c87ea" stroke-width="1.1"/><path d="M5 1V12M8 4V9M10 6.5H6.5" stroke="#3c87ea" stroke-width="1"/></svg>
<div class="abs" style="left:286px;top:577.3px;font-size:12.5px;font-weight:700;color:#2a3050;white-space:nowrap">#1000027</div>
<div class="abs" style="left:286px;top:597.0px;width:57px;height:19px;background:#050505;border-radius:3px;color:#fff;font-size:10.5px;line-height:19px;text-align:center">Reception</div>
<div class="abs" style="left:474.5px;top:575.3px;width:34px;height:37px;border-radius:50%;background:#bdbdbd"></div>
<svg class="abs" style="left:482px;top:583.8px" width="19" height="19" viewBox="0 0 19 19"><circle cx="9.5" cy="6.3" r="3.1" fill="none" stroke="#fff" stroke-width="1.3"/><path d="M3.8 16Q3.8 10.7 9.5 10.7Q15.2 10.7 15.2 16" fill="none" stroke="#fff" stroke-width="1.3"/></svg>
<div class="abs" style="left:515px;top:570.3px;font-size:12px;font-weight:700;color:#222;white-space:nowrap"><span>Jilan Sulafah Samaha</span><span style="display:inline-block;width:13px;height:2px;background:#90caf9;margin-left:6px;vertical-align:middle;position:relative;top:-3px"></span></div>
<svg class="abs" style="left:515px;top:587.3px" width="12" height="12" viewBox="0 0 12 12"><path d="M5.2 3.2A2 2 0 0 1 8.5 1.3L10.2 2.5A2 2 0 0 1 9 5.8" fill="none" stroke="#444" stroke-width="1.1"/><path d="M6.8 8.8A2 2 0 0 1 3.5 10.7L1.8 9.5A2 2 0 0 1 3 6.2" fill="none" stroke="#444" stroke-width="1.1"/><path d="M4.5 7.5L7.5 4.5" stroke="#444" stroke-width="1.1"/></svg>
<div class="abs" style="left:530px;top:589.3px;font-size:11px;color:#333;white-space:nowrap">96664664565</div>
<svg class="abs" style="left:515px;top:608.3px" width="12" height="11" viewBox="0 0 12 11"><rect x="0.8" y="1.5" width="10.4" height="8" fill="none" stroke="#555" stroke-width="1"/><path d="M1 2L6 6L11 2" fill="none" stroke="#555" stroke-width="1"/></svg>
<div class="abs" style="left:530px;top:608.3px;font-size:11px;color:#333;white-space:nowrap">samaha@sharklasers.com</div>
<div class="abs" style="left:864px;width:253px;top:588.8px;font-size:11.5px;font-weight:700;color:#333;text-align:center;white-space:nowrap">SAR 150.00</div>
<div class="abs" style="left:1219px;top:578.3px;width:92px;height:31px;border-radius:15.5px;background:#4a9d4c"></div>
<div class="abs" style="left:1221.7px;top:583.5px;width:20.6px;height:20.6px;border-radius:50%;background:#fff"></div>
<div class="abs" style="left:1226.3px;top:588.0px;width:11.7px;height:11.7px;background:#0b8a1c;border-radius:50%"></div>
<svg class="abs" style="left:1226.3px;top:588.0px" width="12" height="12" viewBox="0 0 12 12"><path d="M4 6.3L5.5 7.8L8 4.5" fill="none" stroke="#fff" stroke-width="0.9"/></svg>
<div class="abs" style="left:1246px;top:586.3px;font-size:12px;color:#fff;white-space:nowrap">Confirmed</div>
<svg class="abs" style="left:1427.5px;top:588.3px" width="13" height="11" viewBox="0 0 13 11"><path d="M1 5.5Q6.5 -0.5 12 5.5Q6.5 11.5 1 5.5Z" fill="none" stroke="#3c87ea" stroke-width="1.1"/><circle cx="6.5" cy="5.5" r="2" fill="none" stroke="#3c87ea" stroke-width="1.1"/></svg>
<svg class="abs" style="left:1447.5px;top:587.3px" width="13" height="13" viewBox="0 0 13 13"><path d="M3.5 4V1.5H9.5V4" fill="none" stroke="#f25a55" stroke-width="1"/><rect x="1.2" y="4" width="10.6" height="5.5" rx="1.5" fill="none" stroke="#f25a55" stroke-width="1.1"/><rect x="3.5" y="7.5" width="6" height="4" fill="#fff" stroke="#f25a55" stroke-width="1"/></svg>
<svg class="abs" style="left:1468.5px;top:587.3px" width="12" height="14" viewBox="0 0 12 14"><path d="M1.5 1H9.5V7M1.5 1V13H6" fill="none" stroke="#3c87ea" stroke-width="1"/><path d="M3.5 4H7.5M3.5 6.5H7.5" stroke="#3c87ea" stroke-width="0.9"/><path d="M6.5 12.5L10.5 8.5" stroke="#3c87ea" stroke-width="1.3"/></svg>
<svg class="abs" style="left:1488px;top:587.3px" width="13" height="13" viewBox="0 0 13 13"><rect x="1" y="1" width="11" height="11" fill="none" stroke="#3c87ea" stroke-width="1.1"/><path d="M5 1V12M8 4V9M10 6.5H6.5" stroke="#3c87ea" stroke-width="1"/></svg>

</body></html>
